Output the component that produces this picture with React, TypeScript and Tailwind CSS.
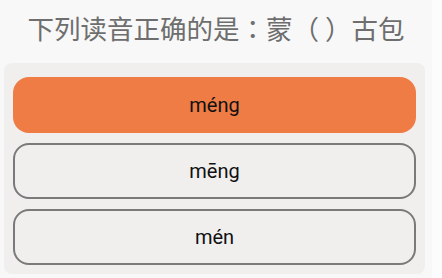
const OPTIONS = [
  { label: "méng", active: true },
  { label: "mēng", active: false },
  { label: "mén", active: false },
];

export default function App() {
  return (
    <div className="flex h-[278px] w-[442px] overflow-hidden bg-[#fcfcfc]">
      <div className="flex w-[432px] flex-col bg-[#f8f8f8]">
        <h1
          className="pt-[14px] text-center text-[26.5px] leading-[27px] font-normal whitespace-pre text-[#6e6e6e]"
          style={{ fontFamily: '"Noto Sans CJK SC", "Noto Sans", sans-serif' }}
        >
          下列读音正确的是
          <span className="font-['Noto_Sans_CJK_TC',sans-serif]">：</span>
          蒙（ ）古包
        </h1>

        <div className="mt-[22px] ml-[4px] flex w-[421px] flex-col gap-[10px] rounded-[8px] bg-[#f0efee] px-[9px] pt-[14px] pb-[9px]">
          {OPTIONS.map((opt) => (
            <button
              key={opt.label}
              type="button"
              className={`flex h-[56px] w-full items-center justify-center rounded-[16px] font-['Roboto',sans-serif] text-[20px] text-[#111] ${
                opt.active
                  ? "bg-[#ef7b45]"
                  : "border-2 border-[#7a7a7a] bg-[#f0efee]"
              }`}
            >
              {opt.label}
            </button>
          ))}
        </div>
      </div>
      <div className="flex-1" />
    </div>
  );
}
